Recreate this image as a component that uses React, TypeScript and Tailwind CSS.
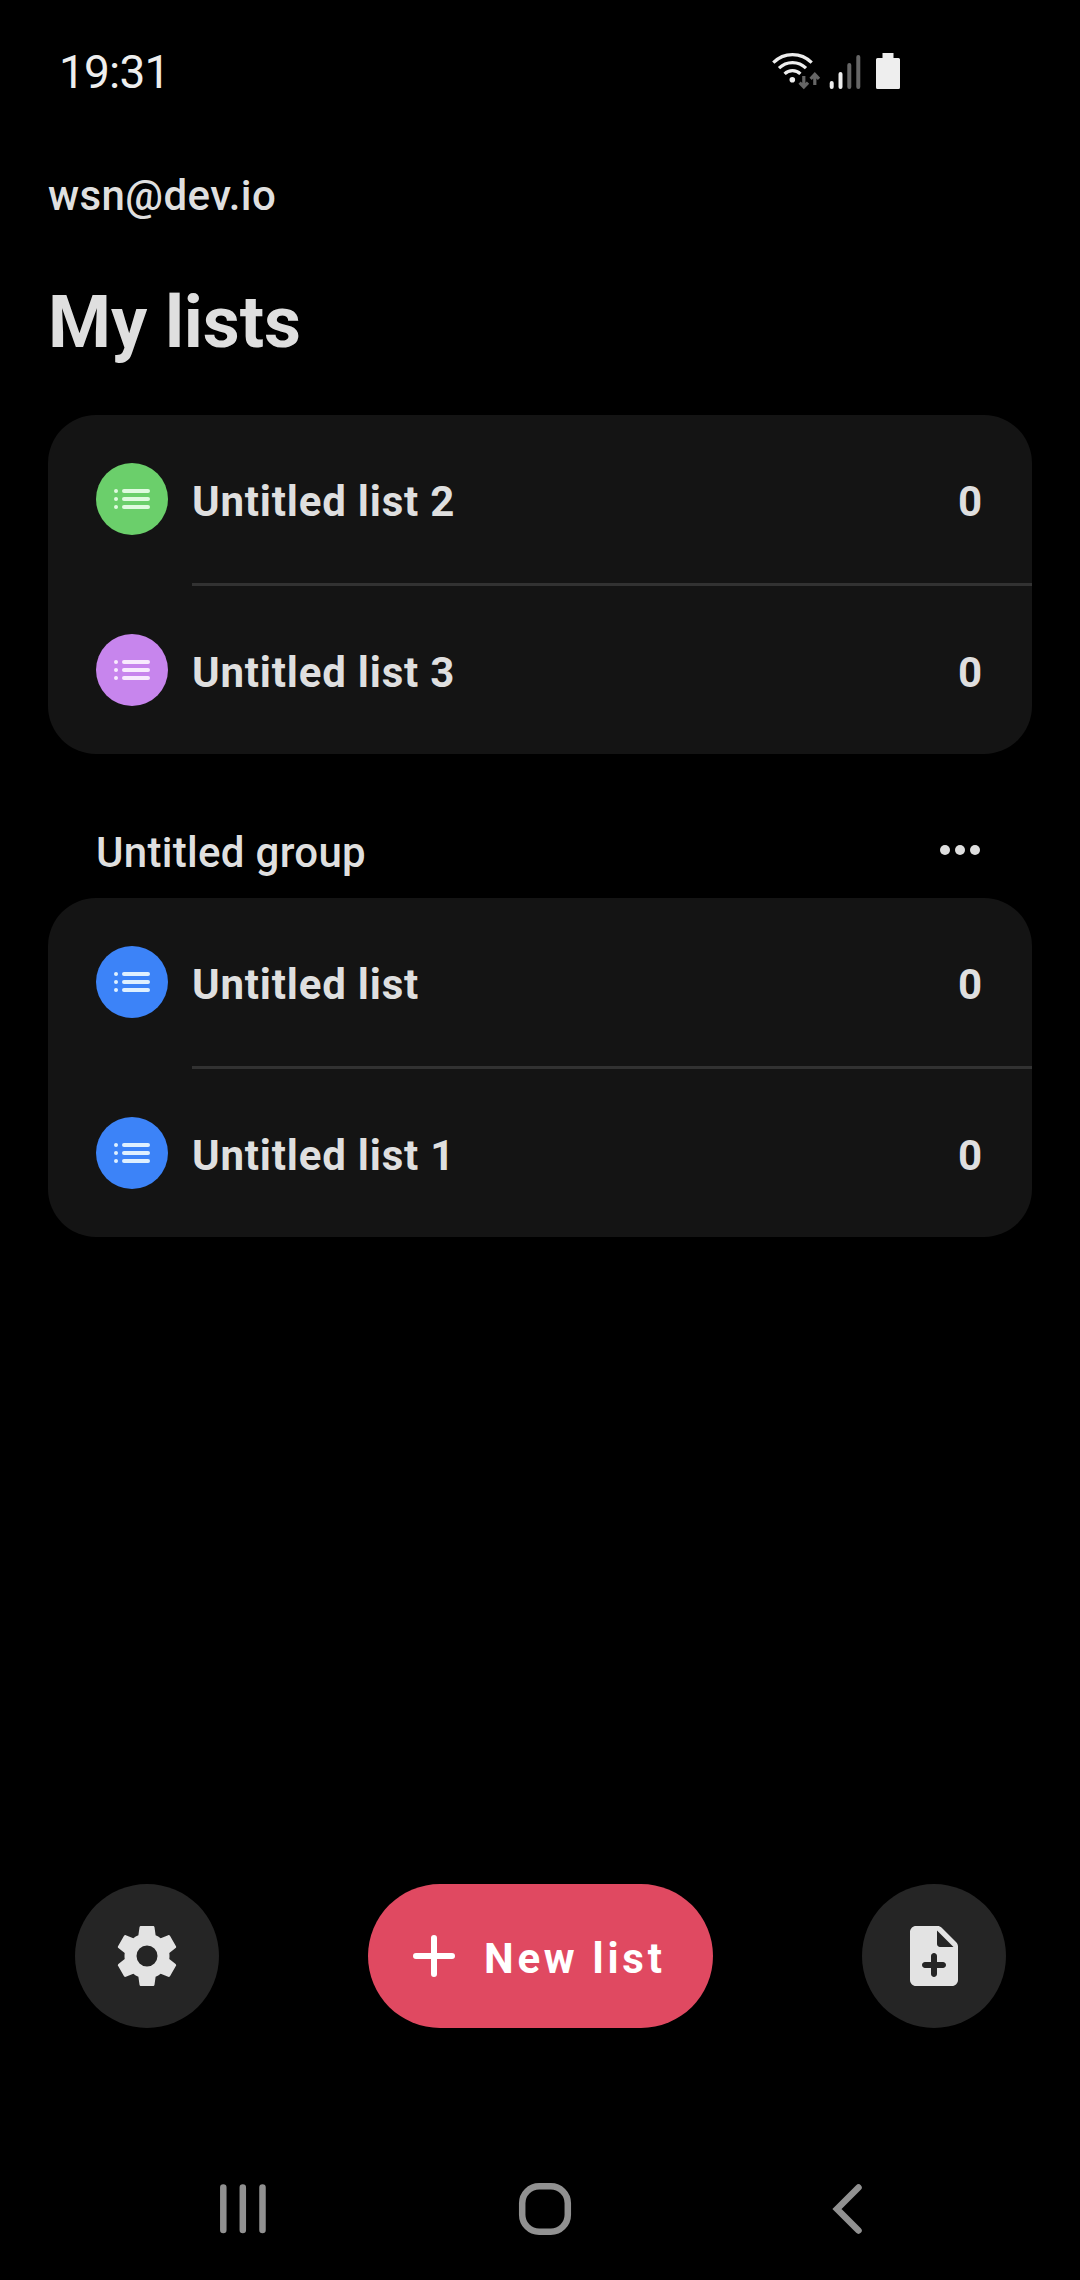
import React from "react";

type Item = { name: string; color: string; stroke: string };

const top: Item[] = [
  { name: "Untitled list 2", color: "bg-[#6bcf6b]", stroke: "text-[#e0fbe0]" },
  { name: "Untitled list 3", color: "bg-[#c785ed]", stroke: "text-[#f8ebfe]" },
];
const grouped: Item[] = [
  { name: "Untitled list", color: "bg-[#3c83f8]", stroke: "text-[#dff0ff]" },
  { name: "Untitled list 1", color: "bg-[#3c83f8]", stroke: "text-[#dff0ff]" },
];

function Card({ items }: { items: Item[] }) {
  return (
    <ul className="w-full overflow-hidden rounded-[48px] bg-[#141414] text-[42px] leading-[72px] font-bold tracking-[0.8px]">
      {items.map((it, i) => (
        <React.Fragment key={it.name}>
          {i > 0 && <li className="ml-36 h-[3px] bg-[#323232]" />}
          <li className="flex h-[168px] items-center gap-6 pr-[49px] pl-12">
            <span className={`flex size-[72px] items-center justify-center rounded-full ${it.color} ${it.stroke}`}>
              <svg width="36" height="20" viewBox="0 0 36 20" stroke="currentColor" strokeWidth="4" strokeLinecap="round">
                <path d="M2 2h.01M2 10h.01M2 18h.01M10 2h24M10 10h24M10 18h24" />
              </svg>
            </span>
            <span className="mt-1.5 flex-1">{it.name}</span>
            <span className="mt-1.5">0</span>
          </li>
        </React.Fragment>
      ))}
    </ul>
  );
}

function StatusIcons() {
  return (
    <svg width="130" height="38" viewBox="0 0 130 38" fill="none">
      <g stroke="#eee" strokeWidth="3.2">
        <path d="M1.3 10.6a27 27 0 0 1 38.4 0" />
        <path d="M7 16.2a19 19 0 0 1 27 0" />
        <path d="M12.6 21.8a11.2 11.2 0 0 1 15.8 0" />
      </g>
      <circle cx="20.3" cy="27.7" r="2.8" fill="#eee" />
      <g stroke="#666" strokeWidth="3.2">
        <path d="M31.8 24v11M27.6 30.6l4.2 4.4 4.2-4.4M42.8 33V22.5M38.6 26.8l4.2-4.4L47 26.8" />
      </g>
      <g strokeWidth="4" strokeLinecap="round">
        <path stroke="#eee" d="M59.7 31v4M68.5 22v13" />
        <path stroke="#666" d="M77.3 13v22M86.3 5v30" />
      </g>
      <path fill="#eee" d="M110.5 1h11v5h5a1.5 1.5 0 0 1 1.5 1.5v28a1.5 1.5 0 0 1-1.5 1.5h-21a1.5 1.5 0 0 1-1.5-1.5v-28a1.5 1.5 0 0 1 1.5-1.5h5z" />
    </svg>
  );
}

export default function App() {
  return (
    <div className="flex h-[2280px] w-[1080px] flex-col bg-black font-[Roboto,sans-serif] text-[#dfdfdf]">
      <header className="flex h-[142px] items-start justify-between pt-[45px] pr-[178px] pl-[59px]">
        <time className="text-[46px] leading-[54px] tracking-[-0.8px] text-[#eee]">19:31</time>
        <div className="pt-[7px]"><StatusIcons /></div>
      </header>
      <main className="flex flex-1 flex-col px-12">
        <p className="mt-[26px] text-[42px] leading-[56px] font-medium tracking-[0.4px]">wsn@dev.io</p>
        <h1 className="mt-[57px] text-[72px] leading-[84px] font-bold tracking-[-0.1px]">My lists</h1>
        <div className="mt-[50px]"><Card items={top} /></div>
        <div className="mt-[69px] flex h-[60px] items-start justify-between pr-[52px] pl-12">
          <h2 className="text-[42px] leading-[60px] font-medium tracking-[0.3px]">Untitled group</h2>
          <svg className="mt-[22px]" width="40" height="10" viewBox="0 0 40 10" fill="currentColor">
            <circle cx="5" cy="5" r="5" /><circle cx="20" cy="5" r="5" /><circle cx="35" cy="5" r="5" />
          </svg>
        </div>
        <div className="mt-[15px]"><Card items={grouped} /></div>
        <div className="mt-auto mb-[132px] flex items-center justify-between pr-[26px] pl-[27px]">
          <button className="flex size-36 items-center justify-center rounded-full bg-[#252525] text-[#e3e3e3]">
            <svg width="72" height="72" viewBox="0 0 24 24" fill="currentColor">
              <path d="M12,15.5A3.5,3.5 0 0,1 8.5,12A3.5,3.5 0 0,1 12,8.5A3.5,3.5 0 0,1 15.5,12A3.5,3.5 0 0,1 12,15.5M19.43,12.97C19.47,12.65 19.5,12.33 19.5,12C19.5,11.67 19.47,11.34 19.43,11L21.54,9.37C21.73,9.22 21.78,8.95 21.66,8.73L19.66,5.27C19.54,5.05 19.27,4.96 19.05,5.05L16.56,6.05C16.04,5.66 15.5,5.32 14.87,5.07L14.5,2.42C14.46,2.18 14.25,2 14,2H10C9.75,2 9.54,2.18 9.5,2.42L9.13,5.07C8.5,5.32 7.96,5.66 7.44,6.05L4.95,5.05C4.73,4.96 4.46,5.05 4.34,5.27L2.34,8.73C2.21,8.95 2.27,9.22 2.46,9.37L4.57,11C4.53,11.34 4.5,11.67 4.5,12C4.5,12.33 4.53,12.65 4.57,12.97L2.46,14.63C2.27,14.78 2.21,15.05 2.34,15.27L4.34,18.73C4.46,18.95 4.73,19.03 4.95,18.95L7.44,17.94C7.96,18.34 8.5,18.68 9.13,18.93L9.5,21.58C9.54,21.82 9.75,22 10,22H14C14.25,22 14.46,21.82 14.5,21.58L14.87,18.93C15.5,18.67 16.04,18.34 16.56,17.94L19.05,18.95C19.27,19.03 19.54,18.95 19.66,18.73L21.66,15.27C21.78,15.05 21.73,14.78 21.54,14.63L19.43,12.97Z" />
            </svg>
          </button>
          <button className="flex h-36 w-[345px] items-center rounded-full bg-[#e04961] pl-[45px] text-white">
            <svg width="42" height="42" viewBox="0 0 42 42" stroke="currentColor" strokeWidth="6" strokeLinecap="round">
              <path d="M21 3v36M3 21h36" />
            </svg>
            <span className="mt-1.5 ml-[29px] text-[42px] leading-[60px] font-bold tracking-[3.75px] whitespace-nowrap">New list</span>
          </button>
          <button className="flex size-36 items-center justify-center rounded-full bg-[#252525] text-[#e3e3e3]">
            <svg width="72" height="72" viewBox="0 0 24 24" fill="currentColor">
              <path fillRule="evenodd" d="M13.17 2H6c-1.1 0-2 .9-2 2v16c0 1.1.9 2 2 2h12c1.1 0 2-.9 2-2V8.83c0-.53-.21-1.04-.59-1.41l-4.83-4.83c-.37-.38-.88-.59-1.41-.59zM15 16h-2v2c0 .55-.45 1-1 1s-1-.45-1-1v-2H9c-.55 0-1-.45-1-1s.45-1 1-1h2v-2c0-.55.45-1 1-1s1 .45 1 1v2h2c.55 0 1 .45 1 1s-.45 1-1 1zM13 8V3.5L18.5 9H14c-.55 0-1-.45-1-1z" />
            </svg>
          </button>
        </div>
      </main>
      <nav className="flex h-[120px]">
        <svg width="1080" height="98" viewBox="0 2160 1080 98" fill="none" stroke="#919191" strokeWidth="6.5" strokeLinecap="round">
          <path d="M223.3 2187.5v42.5M242.8 2187.5v42.5M262.5 2187.5v42.5" />
          <rect x="522.2" y="2186.2" width="45.6" height="45.6" rx="17" />
          <path d="M858.5 2187.5L837 2209l21.5 21.5" />
        </svg>
      </nav>
    </div>
  );
}
